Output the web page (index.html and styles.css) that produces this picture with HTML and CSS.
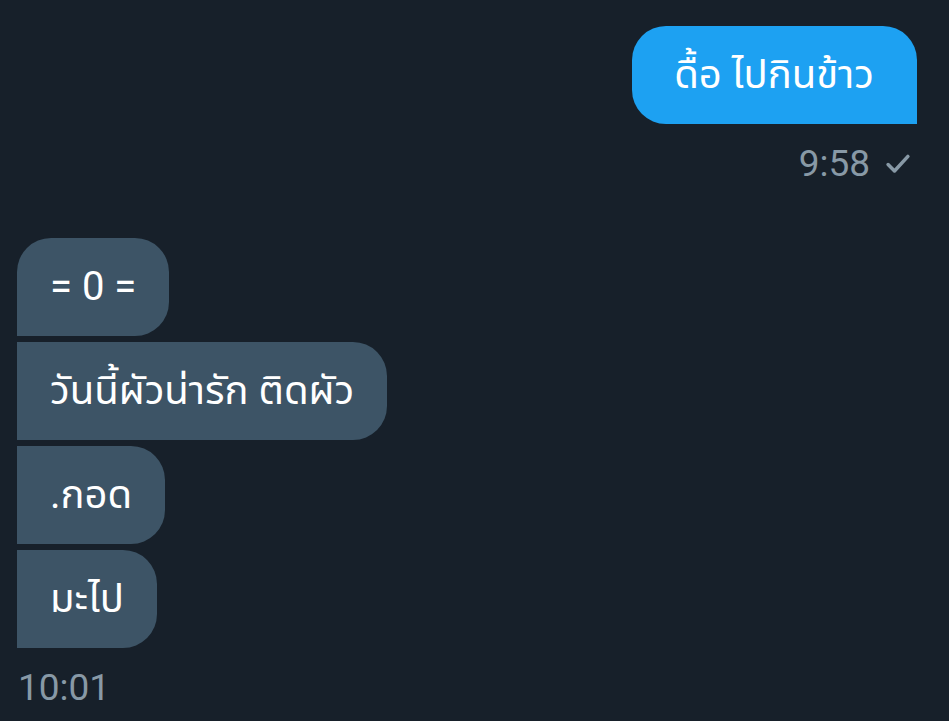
FILE: index.html
```html
<!DOCTYPE html>
<html lang="th">
<head>
<meta charset="utf-8">
<link rel="stylesheet" href="styles.css">
</head>
<body>
<div class="chat">
  <div class="group out">
    <div class="bubble blue">ดื้อ ไปกินข้าว</div>
    <div class="meta out-meta"><span class="time">9:58</span><svg class="check" viewBox="0 0 24 24" width="28" height="28"><path d="M3.5 12.5l5.5 5.5L20.5 5.5" fill="none" stroke="#8899a6" stroke-width="3" stroke-linecap="round" stroke-linejoin="round"/></svg></div>
  </div>
  <div class="group in">
    <div class="bubble grey first">= 0 =</div>
    <div class="bubble grey mid">วันนี้ผัวน่ารัก ติดผัว</div>
    <div class="bubble grey mid">.กอด</div>
    <div class="bubble grey last">มะไป</div>
    <div class="meta in-meta"><span class="time">10:01</span></div>
  </div>
</div>
</body>
</html>
```
FILE: styles.css
```css
html, body {
  margin: 0;
  padding: 0;
  background: #17202a;
}
body {
  width: 949px;
  height: 721px;
  overflow: hidden;
  font-family: Roboto, "Noto Sans", "Noto Sans Thai", sans-serif;
  color: #ffffff;
}
.chat {
  display: flex;
  flex-direction: column;
  padding: 26px 32px 0 17px;
}
.group {
  display: flex;
  flex-direction: column;
}
.group.out {
  align-items: flex-end;
}
.group.in {
  align-items: flex-start;
  margin-top: 54px;
  gap: 6px;
}
.bubble {
  font-size: 40px;
  line-height: 48px;
  padding: 25px 33px 25px 33px;
  border-radius: 34px;
  white-space: nowrap;
}
.blue {
  background: #1da1f2;
  border-bottom-right-radius: 0;
  padding-left: 42px;
  padding-right: 43px;
}
.grey {
  background: #3d5466;
}
.first {
  border-bottom-left-radius: 0;
}
.mid {
  border-top-left-radius: 0;
  border-bottom-left-radius: 0;
}
.last {
  border-top-left-radius: 0;
  border-bottom-left-radius: 0;
}
.meta {
  display: flex;
  align-items: center;
  gap: 14px;
  color: #8899a6;
  font-size: 37px;
  line-height: 40px;
}
.out-meta {
  margin-top: 20px;
  padding-right: 5px;
}
.in-meta {
  margin-top: 14px;
  margin-left: 1px;
}
.check {
  display: block;
}
```
